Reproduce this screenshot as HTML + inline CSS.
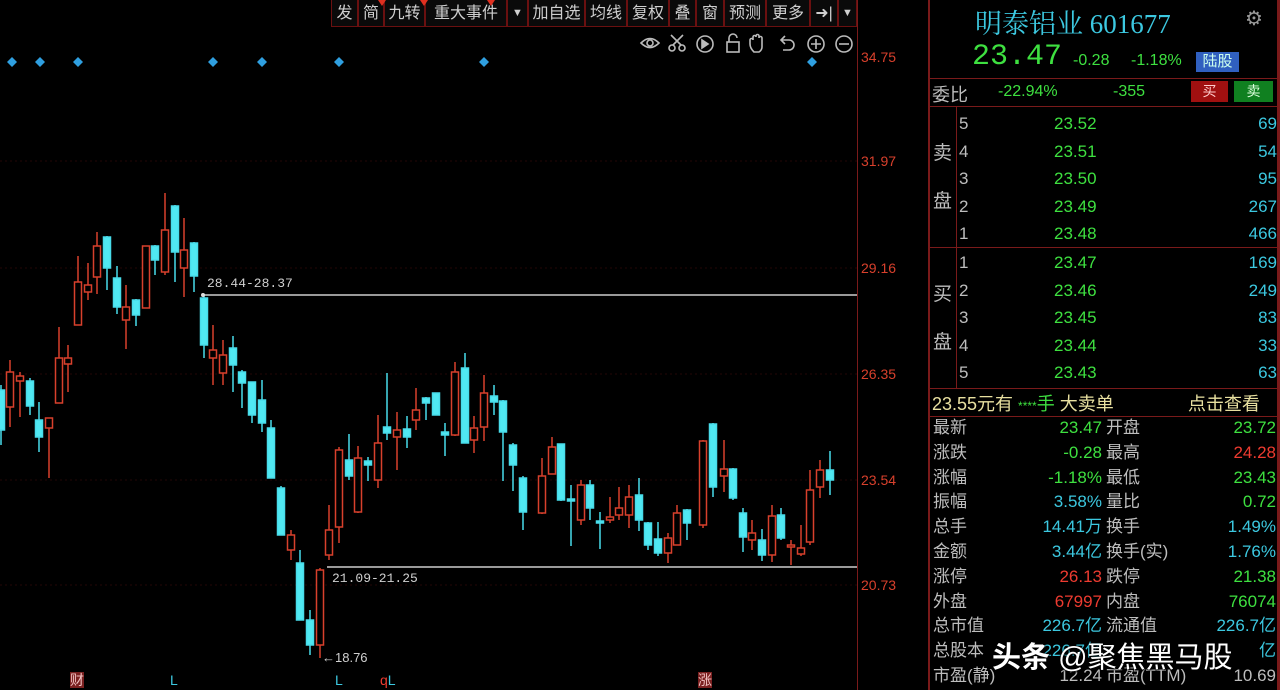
<!DOCTYPE html>
<html><head><meta charset="utf-8"><style>
*{margin:0;padding:0;box-sizing:border-box}
body{width:1280px;height:690px;background:#000;overflow:hidden;position:relative;font-family:"Liberation Sans","Noto Sans CJK SC",sans-serif;}
.a{position:absolute;white-space:nowrap}
.tb{position:absolute;top:0;height:27px;border:1px solid #6a1010;border-top:none;color:#cfcfcf;font-size:16px;line-height:27px;text-align:center;background:#0a0a0a}
.ax{position:absolute;left:861px;color:#d8402c;font-size:14px}
.lb{color:#bdbdbd}
.g{color:#3ee040}.r{color:#ee3b30}.c{color:#3cc8e0}
.st{position:absolute;font-size:17px;line-height:24.8px}
</style></head><body>
<div class="tb" style="left:331px;width:27px">发</div>
<div class="tb" style="left:358px;width:26px">简</div>
<div class="tb" style="left:384px;width:41px">九转</div>
<div class="tb" style="left:425px;width:82px">重大事件</div>
<div class="tb" style="left:507px;width:21px;font-size:11px">▼</div>
<div class="tb" style="left:528px;width:57px">加自选</div>
<div class="tb" style="left:585px;width:42px">均线</div>
<div class="tb" style="left:627px;width:42px">复权</div>
<div class="tb" style="left:669px;width:27px">叠</div>
<div class="tb" style="left:696px;width:28px">窗</div>
<div class="tb" style="left:724px;width:42px">预测</div>
<div class="tb" style="left:766px;width:44px">更多</div>
<div class="tb" style="left:810px;width:28px">➜|</div>
<div class="tb" style="left:838px;width:19px;font-size:11px">▼</div>
<svg class="a" style="left:0;top:0" width="860" height="10"><g fill="#e03020"><path d="M378 0h8l-4 6z"/><path d="M420 0h8l-4 6z"/><path d="M487 0h8l-4 6z"/></g></svg>
<svg class="a" style="left:638px;top:32px" width="218" height="24" fill="none" stroke="#bbb" stroke-width="1.6">
<path d="M3 11q9-9 18 0q-9 9-18 0z"/><circle cx="12" cy="11" r="3"/>
<circle cx="34" cy="16" r="3"/><circle cx="44" cy="16" r="3"/><path d="M35 13l10-10M43 13L33 3"/>
<circle cx="67" cy="12" r="8"/><path d="M64 8v8l6-4z" fill="#bbb"/>
<rect x="89" y="10" width="12" height="10"/><path d="M91 10v-4a4 4 0 0 1 8 0"/>
<path d="M116 20q-4-4-4-8v-4a1.5 1.5 0 0 1 3 0v-3a1.5 1.5 0 0 1 3 0v-1a1.5 1.5 0 0 1 3 0v2a1.5 1.5 0 0 1 3 0v9q0 3-3 5z"/>
<path d="M144 8h7a5 5 0 0 1 0 10h-6M147 4l-4 4 4 4"/>
<circle cx="178" cy="12" r="8"/><path d="M178 7v10M173 12h10"/>
<circle cx="206" cy="12" r="8"/><path d="M201 12h10"/>
</svg>
<svg class="a" style="left:0;top:55px" width="860" height="14"><g fill="#2f9fe0">
<path d="M12 2l5 5-5 5-5-5z"/><path d="M40 2l5 5-5 5-5-5z"/><path d="M78 2l5 5-5 5-5-5z"/><path d="M213 2l5 5-5 5-5-5z"/><path d="M262 2l5 5-5 5-5-5z"/><path d="M339 2l5 5-5 5-5-5z"/><path d="M484 2l5 5-5 5-5-5z"/><path d="M812 2l5 5-5 5-5-5z"/></g></svg>
<div class="a" style="left:857px;top:0;width:1px;height:690px;background:#7a1a1a"></div>
<div class="a" style="left:928px;top:0;width:2px;height:690px;background:#7a1a1a"></div>
<div class="ax" style="top:49px">34.75</div>
<div class="ax" style="top:153px">31.97</div>
<div class="ax" style="top:260px">29.16</div>
<div class="ax" style="top:366px">26.35</div>
<div class="ax" style="top:472px">23.54</div>
<div class="ax" style="top:577px">20.73</div>
<svg class="a" style="left:0;top:0" width="857" height="690">
<g stroke="#240606" stroke-dasharray="2 3"><path d="M0 161H857M0 268H857M0 374H857M0 480H857M0 585H857"/></g>
<path d="M203 295H857M327 567H857" stroke="#9a9a9a" stroke-width="2"/>
<g stroke="#d8402c" stroke-width="1.5" fill="#000">
<path d="M10 360V427M20 372V417M49 418V478M59 327V402M68 345V392M78 256V325M88 263V300M97 232V294M126 285V349M146 246V308M165 193V275M184 218V297M213 325V385M223 340V385M291 530V560M320 568V658M329 505V560M339 447V543M358 446V513M378 415V488M397 412V470M416 388V430M455 362V436M474 416V453M484 375V441M542 458V514M552 437V474M581 480V525M610 497V523M619 487V520M629 485V528M668 533V563M677 505V545M703 440V528M724 440V492M752 520V550M772 505V562M791 540V565M801 525V556M810 470V545M820 460V498"/>
<rect x="6.5" y="372" width="7" height="35"/><rect x="16.5" y="376" width="7" height="5"/><rect x="45.5" y="418" width="7" height="10"/><rect x="55.5" y="358" width="7" height="45"/><rect x="64.5" y="358" width="7" height="6"/><rect x="74.5" y="282" width="7" height="43"/><rect x="84.5" y="285" width="7" height="7"/><rect x="93.5" y="246" width="7" height="31"/><rect x="122.5" y="307" width="7" height="13"/><rect x="142.5" y="246" width="7" height="62"/><rect x="161.5" y="230" width="7" height="42"/><rect x="180.5" y="250" width="7" height="18"/><rect x="209.5" y="350" width="7" height="8"/><rect x="219.5" y="355" width="7" height="18"/><rect x="287.5" y="535" width="7" height="15"/><rect x="316.5" y="570" width="7" height="75"/><rect x="325.5" y="530" width="7" height="25"/><rect x="335.5" y="450" width="7" height="77"/><rect x="354.5" y="458" width="7" height="54"/><rect x="374.5" y="443" width="7" height="37"/><rect x="393.5" y="430" width="7" height="7"/><rect x="412.5" y="410" width="7" height="10"/><rect x="451.5" y="372" width="7" height="63"/><rect x="470.5" y="428" width="7" height="12"/><rect x="480.5" y="393" width="7" height="34"/><rect x="538.5" y="476" width="7" height="37"/><rect x="548.5" y="447" width="7" height="27"/><rect x="577.5" y="485" width="7" height="35"/><rect x="606.5" y="517" width="7" height="3"/><rect x="615.5" y="508" width="7" height="7"/><rect x="625.5" y="497" width="7" height="18"/><rect x="664.5" y="538" width="7" height="15"/><rect x="673.5" y="513" width="7" height="32"/><rect x="699.5" y="441" width="7" height="84"/><rect x="720.5" y="469" width="7" height="7"/><rect x="748.5" y="533" width="7" height="7"/><rect x="768.5" y="516" width="7" height="39"/><rect x="787.5" y="545" width="7" height="2"/><rect x="797.5" y="548" width="7" height="6"/><rect x="806.5" y="490" width="7" height="52"/><rect x="816.5" y="470" width="7" height="17"/>
</g>
<g stroke="#48dcea" stroke-width="1.5" fill="#50e8f2">
<path d="M1 385V445M30 378V415M39 402V452M107 236V290M117 266V314M136 299V326M155 245V275M175 205V282M194 242V292M204 296V358M233 336V392M242 370V408M252 382V423M262 380V432M271 420V478M281 486V535M300 550V620M310 610V655M349 434V480M368 457V481M387 373V440M407 416V448M426 397V420M436 393V415M445 423V456M465 353V443M494 385V415M503 400V481M513 443V491M523 476V530M561 444V501M571 485V546M590 480V520M600 512V549M639 478V531M648 522V550M658 522V556M687 509V540M713 423V497M733 468V500M743 508V552M762 529V561M781 508V540M830 451V495"/>
<rect x="-2.5" y="390" width="7" height="40"/><rect x="26.5" y="381" width="7" height="25"/><rect x="35.5" y="420" width="7" height="17"/><rect x="103.5" y="237" width="7" height="31"/><rect x="113.5" y="278" width="7" height="29"/><rect x="132.5" y="300" width="7" height="15"/><rect x="151.5" y="246" width="7" height="14"/><rect x="171.5" y="206" width="7" height="46"/><rect x="190.5" y="243" width="7" height="33"/><rect x="200.5" y="298" width="7" height="47"/><rect x="229.5" y="348" width="7" height="17"/><rect x="238.5" y="372" width="7" height="11"/><rect x="248.5" y="382" width="7" height="33"/><rect x="258.5" y="400" width="7" height="23"/><rect x="267.5" y="428" width="7" height="50"/><rect x="277.5" y="488" width="7" height="47"/><rect x="296.5" y="563" width="7" height="57"/><rect x="306.5" y="620" width="7" height="25"/><rect x="345.5" y="460" width="7" height="16"/><rect x="364.5" y="461" width="7" height="4"/><rect x="383.5" y="427" width="7" height="6"/><rect x="403.5" y="429" width="7" height="8"/><rect x="422.5" y="398" width="7" height="5"/><rect x="432.5" y="393" width="7" height="22"/><rect x="441.5" y="432" width="7" height="3"/><rect x="461.5" y="368" width="7" height="75"/><rect x="490.5" y="396" width="7" height="6"/><rect x="499.5" y="401" width="7" height="31"/><rect x="509.5" y="445" width="7" height="20"/><rect x="519.5" y="478" width="7" height="34"/><rect x="557.5" y="444" width="7" height="56"/><rect x="567.5" y="499" width="7" height="2"/><rect x="586.5" y="485" width="7" height="23"/><rect x="596.5" y="521" width="7" height="2"/><rect x="635.5" y="495" width="7" height="25"/><rect x="644.5" y="523" width="7" height="22"/><rect x="654.5" y="539" width="7" height="14"/><rect x="683.5" y="510" width="7" height="13"/><rect x="709.5" y="424" width="7" height="63"/><rect x="729.5" y="469" width="7" height="29"/><rect x="739.5" y="513" width="7" height="24"/><rect x="758.5" y="540" width="7" height="15"/><rect x="777.5" y="515" width="7" height="23"/><rect x="826.5" y="470" width="7" height="10"/>
</g>
<text x="207" y="287" fill="#d0d0d0" font-family="Liberation Mono" font-size="13">28.44-28.37</text>
<text x="332" y="582" fill="#d0d0d0" font-family="Liberation Mono" font-size="13">21.09-21.25</text>
<text x="322" y="662" fill="#d0d0d0" font-size="13">←18.76</text>
<circle cx="203" cy="295" r="2" fill="#ddd"/>
</svg>
<div class="a" style="left:70px;top:672px;font-size:14px;color:#f0c0c0;background:#7a2020;line-height:16px">财</div>
<div class="a c" style="left:170px;top:672px;font-size:14px">L</div>
<div class="a c" style="left:335px;top:672px;font-size:14px">L</div>
<div class="a" style="left:380px;top:672px;font-size:14px"><span class="r">q</span><span class="c">L</span></div>
<div class="a" style="left:698px;top:672px;font-size:14px;color:#f0c0c0;background:#7a2020;line-height:16px">涨</div>
<div class="a" style="left:930px;top:78px;width:350px;height:1px;background:#7a1a1a"></div>
<div class="a" style="left:930px;top:106px;width:350px;height:1px;background:#7a1a1a"></div>
<div class="a" style="left:930px;top:247px;width:350px;height:1px;background:#7a1a1a"></div>
<div class="a" style="left:930px;top:388px;width:350px;height:1px;background:#7a1a1a"></div>
<div class="a" style="left:930px;top:416px;width:350px;height:1px;background:#7a1a1a"></div>
<div class="a" style="left:956px;top:106px;width:1px;height:282px;background:#7a1a1a"></div>
<div class="a" style="left:1277px;top:0;width:3px;height:690px;background:#7a1a1a"></div>
<div class="a c" style="left:975px;top:2px;font-size:27px;font-family:'Liberation Serif','Noto Serif CJK SC',serif">明泰铝业 601677</div>
<div class="a" style="left:1245px;top:6px;font-size:20px;color:#999">⚙</div>
<div class="a g" style="left:972px;top:40px;font-size:30px;font-family:'Liberation Mono',monospace">23.47</div>
<div class="a g" style="left:1073px;top:52px;font-size:16px">-0.28</div>
<div class="a g" style="left:1131px;top:52px;font-size:16px">-1.18%</div>
<div class="a" style="left:1196px;top:52px;width:43px;height:20px;background:#3060c0;color:#cfe;font-size:15px;line-height:20px;text-align:center">陆股</div>
<div class="a lb" style="left:932px;top:81px;font-size:18px">委比</div>
<div class="a g" style="left:998px;top:83px;font-size:16px">-22.94%</div>
<div class="a g" style="left:1113px;top:83px;font-size:16px">-355</div>
<div class="a" style="left:1191px;top:81px;width:37px;height:21px;background:#a01010;color:#fcc;font-size:14px;text-align:center;line-height:21px">买</div>
<div class="a" style="left:1234px;top:81px;width:39px;height:21px;background:#108020;color:#dfd;font-size:14px;text-align:center;line-height:21px">卖</div>
<div class="a lb" style="left:933px;top:130px;font-size:19px;line-height:48px;width:20px">卖<br>盘</div>
<div class="a lb" style="left:933px;top:271px;font-size:19px;line-height:48px;width:20px">买<br>盘</div>
<div class="a" style="left:959px;top:110px;width:318px;font-size:17px;line-height:27.6px">
<div style="position:relative;height:27.6px"><span class="lb">5</span><span class="g a" style="left:95px">23.52</span><span class="c a" style="right:0">69</span></div>
<div style="position:relative;height:27.6px"><span class="lb">4</span><span class="g a" style="left:95px">23.51</span><span class="c a" style="right:0">54</span></div>
<div style="position:relative;height:27.6px"><span class="lb">3</span><span class="g a" style="left:95px">23.50</span><span class="c a" style="right:0">95</span></div>
<div style="position:relative;height:27.6px"><span class="lb">2</span><span class="g a" style="left:95px">23.49</span><span class="c a" style="right:0">267</span></div>
<div style="position:relative;height:27.6px"><span class="lb">1</span><span class="g a" style="left:95px">23.48</span><span class="c a" style="right:0">466</span></div>
</div>
<div class="a" style="left:959px;top:249px;width:318px;font-size:17px;line-height:27.6px">
<div style="position:relative;height:27.6px"><span class="lb">1</span><span class="g a" style="left:95px">23.47</span><span class="c a" style="right:0">169</span></div>
<div style="position:relative;height:27.6px"><span class="lb">2</span><span class="g a" style="left:95px">23.46</span><span class="c a" style="right:0">249</span></div>
<div style="position:relative;height:27.6px"><span class="lb">3</span><span class="g a" style="left:95px">23.45</span><span class="c a" style="right:0">83</span></div>
<div style="position:relative;height:27.6px"><span class="lb">4</span><span class="g a" style="left:95px">23.44</span><span class="c a" style="right:0">33</span></div>
<div style="position:relative;height:27.6px"><span class="lb">5</span><span class="g a" style="left:95px">23.43</span><span class="c a" style="right:0">63</span></div>
</div>
<div class="a" style="left:932px;top:390px;font-size:18px;color:#e8e0a0">23.55元有 <span class="g" style="font-size:12px">****</span><span class="g">手</span> 大卖单</div>
<div class="a" style="left:1188px;top:390px;font-size:18px;color:#e8e0a0">点击查看</div>
<div class="st lb" style="left:933px;top:416px">最新<br>涨跌<br>涨幅<br>振幅<br>总手<br>金额<br>涨停<br>外盘<br>总市值<br>总股本<br>市盈(静)</div>
<div class="st" style="right:178px;top:416px;text-align:right"><span class="g">23.47</span><br><span class="g">-0.28</span><br><span class="g">-1.18%</span><br><span class="c">3.58%</span><br><span class="c">14.41万</span><br><span class="c">3.44亿</span><br><span class="r">26.13</span><br><span class="r">67997</span><br><span class="c">226.7亿</span><br><span class="c">226.7亿</span><br><span class="lb">12.24</span></div>
<div class="st lb" style="left:1106px;top:416px">开盘<br>最高<br>最低<br>量比<br>换手<br>换手(实)<br>跌停<br>内盘<br>流通值<br><br>市盈(TTM)</div>
<div class="st" style="right:4px;top:416px;text-align:right"><span class="g">23.72</span><br><span class="r">24.28</span><br><span class="g">23.43</span><br><span class="g">0.72</span><br><span class="c">1.49%</span><br><span class="c">1.76%</span><br><span class="g">21.38</span><br><span class="g">76074</span><br><span class="c">226.7亿</span><br><span class="c">亿</span><br><span class="lb">10.69</span></div>
<div class="a" style="left:992px;top:634px;font-size:29px;color:#fff;font-weight:bold;text-shadow:0 0 3px #000,1px 1px 2px #000">头条 <span style="font-weight:normal">@聚焦黑马股</span></div>
</body></html>
